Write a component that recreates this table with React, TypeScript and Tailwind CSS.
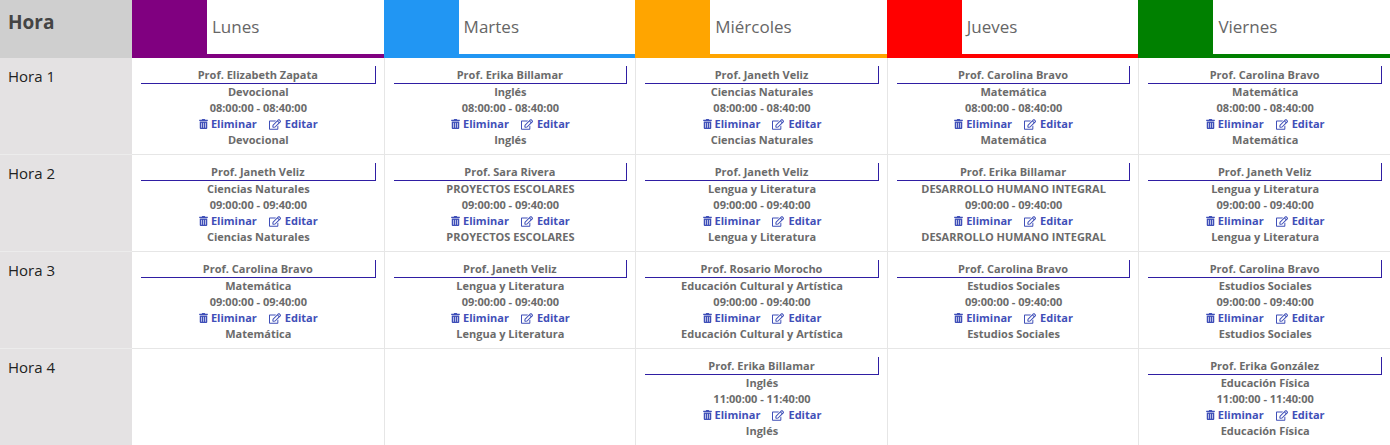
import React from "react";
import { FaTrashAlt, FaRegEdit } from "react-icons/fa";

type Entry = { prof: string; subj: string; time: string } | null;

const days = [
  { name: "Lunes", sq: "bg-[#800080]", bd: "border-[#800080]" },
  { name: "Martes", sq: "bg-[#2196f3]", bd: "border-[#2196f3]" },
  { name: "Miércoles", sq: "bg-[#ffa500]", bd: "border-[#ffa500]" },
  { name: "Jueves", sq: "bg-[#ff0000]", bd: "border-[#ff0000]" },
  { name: "Viernes", sq: "bg-[#008000]", bd: "border-[#008000]" },
];

const t1 = "08:00:00 - 08:40:00";
const t2 = "09:00:00 - 09:40:00";
const t4 = "11:00:00 - 11:40:00";

const rows: { label: string; cells: Entry[] }[] = [
  {
    label: "Hora 1",
    cells: [
      { prof: "Prof. Elizabeth Zapata", subj: "Devocional", time: t1 },
      { prof: "Prof. Erika Billamar", subj: "Inglés", time: t1 },
      { prof: "Prof. Janeth Veliz", subj: "Ciencias Naturales", time: t1 },
      { prof: "Prof. Carolina Bravo", subj: "Matemática", time: t1 },
      { prof: "Prof. Carolina Bravo", subj: "Matemática", time: t1 },
    ],
  },
  {
    label: "Hora 2",
    cells: [
      { prof: "Prof. Janeth Veliz", subj: "Ciencias Naturales", time: t2 },
      { prof: "Prof. Sara Rivera", subj: "PROYECTOS ESCOLARES", time: t2 },
      { prof: "Prof. Janeth Veliz", subj: "Lengua y Literatura", time: t2 },
      { prof: "Prof. Erika Billamar", subj: "DESARROLLO HUMANO INTEGRAL", time: t2 },
      { prof: "Prof. Janeth Veliz", subj: "Lengua y Literatura", time: t2 },
    ],
  },
  {
    label: "Hora 3",
    cells: [
      { prof: "Prof. Carolina Bravo", subj: "Matemática", time: t2 },
      { prof: "Prof. Janeth Veliz", subj: "Lengua y Literatura", time: t2 },
      { prof: "Prof. Rosario Morocho", subj: "Educación Cultural y Artística", time: t2 },
      { prof: "Prof. Carolina Bravo", subj: "Estudios Sociales", time: t2 },
      { prof: "Prof. Carolina Bravo", subj: "Estudios Sociales", time: t2 },
    ],
  },
  {
    label: "Hora 4",
    cells: [
      null,
      null,
      { prof: "Prof. Erika Billamar", subj: "Inglés", time: t4 },
      null,
      { prof: "Prof. Erika González", subj: "Educación Física", time: t4 },
    ],
  },
];

function Cell({ e, first }: { e: Entry; first: boolean }) {
  return (
    <div
      className={`h-[97px] border-b border-[#e6e6e6] bg-white pt-[8px] pl-[9px] pr-[8px] text-center text-[11px] font-bold leading-[16px] text-[#6b6b6b] ${
        first ? "" : "border-l"
      }`}
    >
      {e && (
        <>
          <div className="h-[18px] border-b border-r border-[#2f1ea3] leading-[17px]">{e.prof}</div>
          <div>{e.subj}</div>
          <div>{e.time}</div>
          <div className="flex items-center justify-center gap-[12px] text-[#3f4fb8]">
            <span className="flex items-center gap-[3px]">
              <FaTrashAlt className="h-[10px] w-[9px]" />
              Eliminar
            </span>
            <span className="flex items-center gap-[4px]">
              <FaRegEdit className="h-[11px] w-[12px]" />
              Editar
            </span>
          </div>
          <div>{e.subj}</div>
        </>
      )}
    </div>
  );
}

export default function App() {
  return (
    <div
      className="grid w-[1390px] grid-cols-[132px_repeat(5,1fr)] bg-white"
      style={{ fontFamily: '"Open Sans", "Noto Sans", sans-serif' }}
    >
      <div className="h-[58px] bg-[#cfcfcf] pl-[8px] pt-[8px] text-[19px] font-bold text-[#444]">Hora</div>
      {days.map((d) => (
        <div key={d.name} className={`flex h-[58px] border-b-4 bg-white ${d.bd}`}>
          <div className={`w-[75px] shrink-0 ${d.sq}`} />
          <div className="pl-[5px] pt-[14px] text-[17px] text-[#666]">{d.name}</div>
        </div>
      ))}
      {rows.map((r) => (
        <React.Fragment key={r.label}>
          <div className="h-[97px] border-b border-[#ececec] bg-[#e4e2e3] pl-[8px] pt-[7px] text-[15px] font-medium text-[#222]">
            {r.label}
          </div>
          {r.cells.map((c, i) => (
            <Cell key={i} e={c} first={i === 0} />
          ))}
        </React.Fragment>
      ))}
    </div>
  );
}
